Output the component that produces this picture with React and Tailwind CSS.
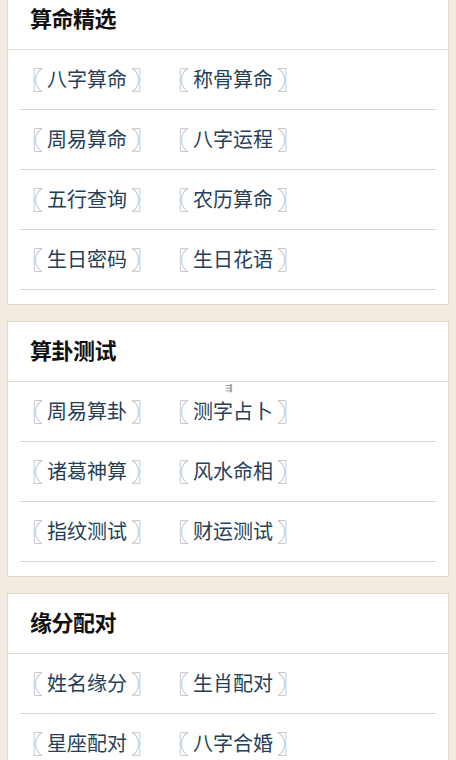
const sections = [
  {
    title: "算命精选",
    items: [
      ["八字算命", "称骨算命"],
      ["周易算命", "八字运程"],
      ["五行查询", "农历算命"],
      ["生日密码", "生日花语"],
    ],
  },
  {
    title: "算卦测试",
    mark: true,
    items: [
      ["周易算卦", "测字占卜"],
      ["诸葛神算", "风水命相"],
      ["指纹测试", "财运测试"],
    ],
  },
  {
    title: "缘分配对",
    items: [
      ["姓名缘分", "生肖配对"],
      ["星座配对", "八字合婚"],
      ["血型配对", "QQ号配对"],
    ],
  },
];

function Item({ name }) {
  return (
    <a className="flex items-center leading-none">
      <span className="text-[24px] text-[#a9a9a9] -ml-[4px]">〖</span>
      <span className="text-[20px] text-[#263f58] px-[4px]">{name}</span>
      <span className="text-[24px] text-[#a9a9a9] -mr-[4px]">〗</span>
    </a>
  );
}

export default function App() {
  return (
    <div
      className="min-h-screen bg-[#f3ece2] overflow-hidden"
      style={{ fontFamily: '"Noto Sans CJK SC", "Noto Sans", sans-serif' }}
    >
      <div className="-mt-[11px] flex flex-col gap-[16px]">
        {sections.map((sec) => (
          <div
            key={sec.title}
            className="mx-[7px] bg-white border border-[#e2d8ca] pb-[14px]"
          >
            <div className="relative h-[60px] flex items-center px-[22px] pb-[4px] border-b border-[#e4ddd2]">
              <h2 className="text-[22px] font-bold text-[#111] tracking-[-0.5px]">
                {sec.title}
              </h2>
              {sec.mark && (
                <span className="absolute left-[217px] top-[61px] text-[9px] leading-none text-[#888]">
                  ⇶
                </span>
              )}
            </div>
            <ul className="px-[12px]">
              {sec.items.map((row, i) => (
                <li
                  key={i}
                  className="h-[60px] flex items-center border-b border-[#d6d6d6] pl-[3px] pb-[2px] gap-[18px]"
                >
                  {row.map((n) => (
                    <Item key={n} name={n} />
                  ))}
                </li>
              ))}
            </ul>
          </div>
        ))}
      </div>
    </div>
  );
}
